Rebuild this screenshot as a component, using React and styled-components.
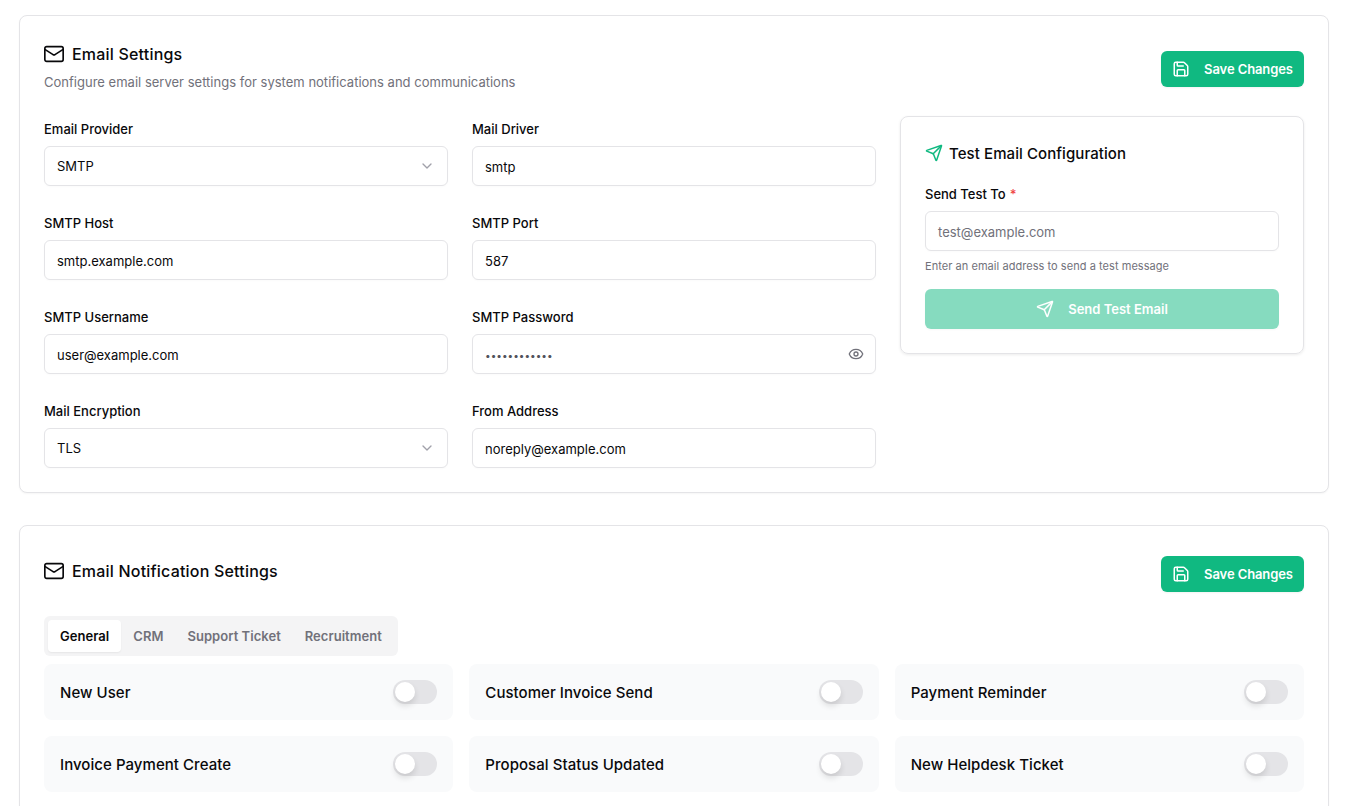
import React from 'react'
import styled, { createGlobalStyle } from 'styled-components'
import { Mail, Save, Send, Eye, ChevronDown } from 'lucide-react'

const GlobalStyle = createGlobalStyle`
  html, body {
    margin: 0;
    height: 812px;
    overflow: hidden;
    background: #fff;
  }
  * {
    box-sizing: border-box;
  }
  body {
    font-family: Inter, "Noto Sans", sans-serif;
    color: #09090b;
  }
`

const Page = styled.div`
  display: flex;
  flex-direction: column;
  gap: 32px;
  height: 806px;
  overflow: hidden;
  padding: 15px 17px 0 19px;
`

const Card = styled.section`
  flex: none;
  background: #fff;
  border: 1px solid #e4e4e7;
  border-radius: 8px;
  box-shadow: 0 1px 2px rgba(0, 0, 0, 0.04);
  padding: 24px;
`

const CardHeader = styled.div`
  display: flex;
  justify-content: space-between;
  align-items: flex-start;
  height: ${(p) => p.$height}px;
`

const TitleRow = styled.div`
  display: flex;
  align-items: center;
  gap: 7px;
  height: 28px;
  margin-top: ${(p) => p.$offset || 0}px;
`

const MailIcon = styled(Mail)`
  margin-left: -1px;
`

const Title = styled.h2`
  margin: 0;
  font-size: 16px;
  line-height: 28px;
  font-weight: 500;
  letter-spacing: 0.2px;
`

const Subtitle = styled.p`
  margin: 4px 0 0;
  font-size: 13px;
  line-height: 20px;
  color: #71717a;
  letter-spacing: 0.01px;
`

const PrimaryButton = styled.button`
  display: flex;
  align-items: center;
  justify-content: center;
  gap: 14px;
  flex: none;
  white-space: nowrap;
  font-family: inherit;
  font-size: 13px;
  font-weight: 600;
  letter-spacing: ${(p) => (p.$wide ? 0 : -0.1)}px;
  color: #fff;
  background: #10b981;
  border: 0;
  border-radius: 6px;
  height: ${(p) => (p.$wide ? 40 : 36)}px;
  width: ${(p) => (p.$wide ? '100%' : '143px')};
  padding: 0 11px;
  margin-top: ${(p) => p.$offset}px;
  opacity: ${(p) => (p.$wide ? 0.5 : 1)};
  box-shadow: 0 1px 2px rgba(0, 0, 0, 0.05);
`

const FormGrid = styled.div`
  display: grid;
  grid-template-columns: repeat(3, 404px);
  column-gap: 24px;
  align-items: start;
`

const Fields = styled.div`
  grid-column: span 2;
  display: grid;
  grid-template-columns: repeat(2, 404px);
  gap: 27px 24px;
  padding-top: 3px;
`

const Label = styled.label`
  display: block;
  font-size: 13px;
  line-height: 20px;
  font-weight: 500;
  margin-bottom: 7px;
`

const Required = styled.span`
  color: #ef4444;
  margin-left: 4px;
`

const InputBox = styled.div`
  display: flex;
  align-items: center;
  justify-content: space-between;
  height: 40px;
  padding: ${(p) => (p.$select ? '0 12px' : '2px 11px 0 12px')};
  background: #fff;
  border: 1px solid #e4e4e7;
  border-radius: 6px;
  font-size: 13px;
  color: ${(p) => (p.$muted ? '#71717a' : '#09090b')};
  box-shadow: 0 1px 2px rgba(0, 0, 0, 0.02);
  svg {
    flex: none;
  }
`

const EyeIcon = styled(Eye)`
  margin-bottom: 3px;
`

const PasswordDots = styled.span`
  font-size: 10px;
  line-height: 14px;
  color: #52525b;
`

const TestCard = styled.aside`
  border: 1px solid #e4e4e7;
  border-radius: 8px;
  box-shadow: 0 1px 3px rgba(0, 0, 0, 0.08);
  padding: 24px;
  height: 238px;
`

const TestTitleRow = styled.div`
  display: flex;
  align-items: center;
  gap: 6px;
  height: 24px;
  margin-bottom: 19px;
`

const TestTitle = styled.h3`
  margin: 2px 0 0;
  font-size: 15px;
  line-height: 24px;
  font-weight: 500;
  letter-spacing: 0.08px;
`

const Help = styled.p`
  margin: 8px 0 16px;
  font-size: 11px;
  line-height: 14px;
  color: #71717a;
  letter-spacing: 0.05px;
`

const TabList = styled.div`
  display: flex;
  width: fit-content;
  padding: 4px;
  height: 40px;
  background: #f4f4f5;
  border-radius: 6px;
`

const Tab = styled.div`
  display: flex;
  align-items: center;
  padding: 0 12px;
  font-size: 13px;
  font-weight: 600;
  letter-spacing: 0.04px;
  border-radius: 4px;
  color: ${(p) => (p.$active ? '#09090b' : '#71717a')};
  background: ${(p) => (p.$active ? '#fff' : 'transparent')};
  box-shadow: ${(p) => (p.$active ? '0 1px 2px rgba(0,0,0,0.06)' : 'none')};
`

const ToggleGrid = styled.div`
  display: grid;
  grid-template-columns: repeat(3, 1fr);
  gap: 16px;
  margin-top: 8px;
`

const ToggleRow = styled.div`
  display: flex;
  align-items: center;
  justify-content: space-between;
  height: 56px;
  padding: 0 16px;
  background: #f9fafb;
  border-radius: 8px;
  font-size: 15px;
  font-weight: 500;
  letter-spacing: 0.05px;
`

const Track = styled.div`
  position: relative;
  width: 44px;
  height: 24px;
  border-radius: 12px;
  background: #e4e4e7;
`

const Thumb = styled.div`
  position: absolute;
  top: 2px;
  left: 2px;
  width: 20px;
  height: 20px;
  border-radius: 50%;
  background: #fff;
  box-shadow: 0 4px 6px rgba(0, 0, 0, 0.12);
`

const fields = [
  { label: 'Email Provider', value: 'SMTP', select: true },
  { label: 'Mail Driver', value: 'smtp' },
  { label: 'SMTP Host', value: 'smtp.example.com' },
  { label: 'SMTP Port', value: '587' },
  { label: 'SMTP Username', value: 'user@example.com' },
  { label: 'SMTP Password', password: true },
  { label: 'Mail Encryption', value: 'TLS', select: true },
  { label: 'From Address', value: 'noreply@example.com' },
]

const tabs = ['General', 'CRM', 'Support Ticket', 'Recruitment']

const toggles = [
  'New User',
  'Customer Invoice Send',
  'Payment Reminder',
  'Invoice Payment Create',
  'Proposal Status Updated',
  'New Helpdesk Ticket',
]

const SaveButton = ({ offset }) => (
  <PrimaryButton $offset={offset}>
    <Save size={18} />
    Save Changes
  </PrimaryButton>
)

const Field = ({ label, value, select, password }) => (
  <div>
    <Label>{label}</Label>
    <InputBox $select={select}>
      {password ? <PasswordDots>••••••••••••</PasswordDots> : value}
      {select && <ChevronDown size={16} color="#a1a1aa" />}
      {password && <EyeIcon size={16} color="#71717a" />}
    </InputBox>
  </div>
)

const App = () => {
  return (
    <>
      <GlobalStyle />
      <Page>
        <Card>
          <CardHeader $height={76}>
            <div>
              <TitleRow>
                <MailIcon size={22} strokeWidth={1.8} />
                <Title>Email Settings</Title>
              </TitleRow>
              <Subtitle>Configure email server settings for system notifications and communications</Subtitle>
            </div>
            <SaveButton offset={11} />
          </CardHeader>
          <FormGrid>
            <Fields>
              {fields.map((f) => (
                <Field key={f.label} {...f} />
              ))}
            </Fields>
            <TestCard>
              <TestTitleRow>
                <Send size={18} color="#10b981" />
                <TestTitle>Test Email Configuration</TestTitle>
              </TestTitleRow>
              <Label>
                Send Test To<Required>*</Required>
              </Label>
              <InputBox $muted>test@example.com</InputBox>
              <Help>Enter an email address to send a test message</Help>
              <PrimaryButton $wide $offset={0}>
                <Send size={18} />
                Send Test Email
              </PrimaryButton>
            </TestCard>
          </FormGrid>
        </Card>
        <Card>
          <CardHeader $height={66}>
            <TitleRow $offset={7}>
              <MailIcon size={22} strokeWidth={1.8} />
              <Title>Email Notification Settings</Title>
            </TitleRow>
            <SaveButton offset={6} />
          </CardHeader>
          <TabList>
            {tabs.map((t, i) => (
              <Tab key={t} $active={i === 0}>
                {t}
              </Tab>
            ))}
          </TabList>
          <ToggleGrid>
            {toggles.map((t) => (
              <ToggleRow key={t}>
                {t}
                <Track>
                  <Thumb />
                </Track>
              </ToggleRow>
            ))}
          </ToggleGrid>
        </Card>
      </Page>
    </>
  )
}

export default App
